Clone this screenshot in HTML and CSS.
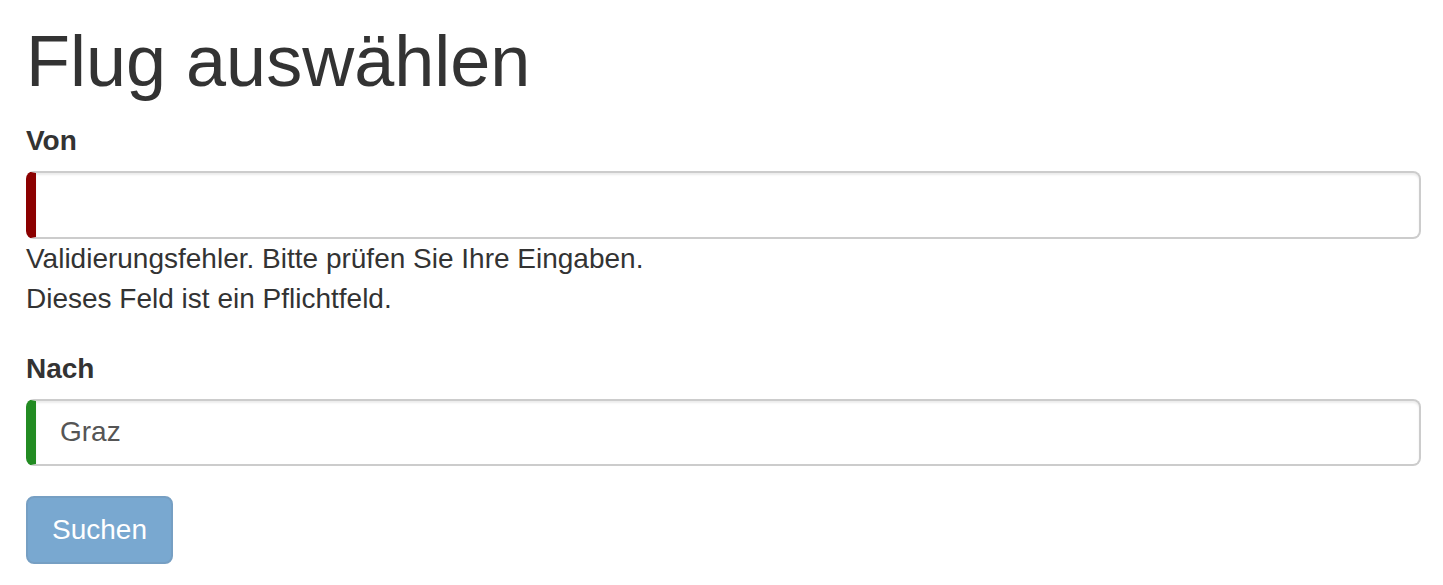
FILE: index.html
```html
<!DOCTYPE html>
<html lang="de">
<head>
<meta charset="utf-8">
<title>Flug auswählen</title>
<link rel="stylesheet" href="styles.css">
</head>
<body>
<div class="container">
  <h1 class="title">Flug auswählen</h1>
  <form class="form">
    <div class="form-group">
      <label class="label" for="von">Von</label>
      <input class="input input-invalid" id="von" type="text" value="">
      <div class="help">Validierungsfehler. Bitte prüfen Sie Ihre Eingaben.</div>
      <div class="help">Dieses Feld ist ein Pflichtfeld.</div>
    </div>
    <div class="form-group">
      <label class="label" for="nach">Nach</label>
      <input class="input input-valid" id="nach" type="text" value="Graz">
    </div>
    <button class="btn" type="button" disabled>Suchen</button>
  </form>
</div>
</body>
</html>
```
FILE: styles.css
```css
* { box-sizing: border-box; }
html, body { margin: 0; padding: 0; background: #fff; }
body {
  font-family: "Liberation Sans", Arial, sans-serif;
  font-size: 28px;
  line-height: 40px;
  color: #333;
}
.container {
  padding: 22px 22px 0 26px;
}
.title {
  margin: 0 0 20px 0;
  font-size: 72px;
  font-weight: 400;
  line-height: 79px;
}
.form { display: flex; flex-direction: column; }
.form-group {
  display: flex;
  flex-direction: column;
  margin-bottom: 30px;
}
.label {
  font-weight: 700;
  margin-bottom: 10px;
}
.input {
  display: block;
  width: 100%;
  height: 67.5px;
  padding: 0 24px;
  font-family: inherit;
  font-size: 28px;
  color: #555;
  background: #fff;
  border: 2px solid #ccc;
  border-radius: 8px;
  box-shadow: inset 0 2px 2px rgba(0,0,0,.075);
  outline: none;
}
.input-invalid { border-left: 10px solid #8b0000; }
.input-valid { border-left: 10px solid #228b22; }
.help { line-height: 40px; }
.btn {
  align-self: flex-start;
  height: 67.5px;
  padding: 0 24px;
  font-family: inherit;
  font-size: 28px;
  color: #fff;
  background: #337ab7;
  border: 2px solid #2e6da4;
  border-radius: 8px;
  opacity: .65;
}
```
